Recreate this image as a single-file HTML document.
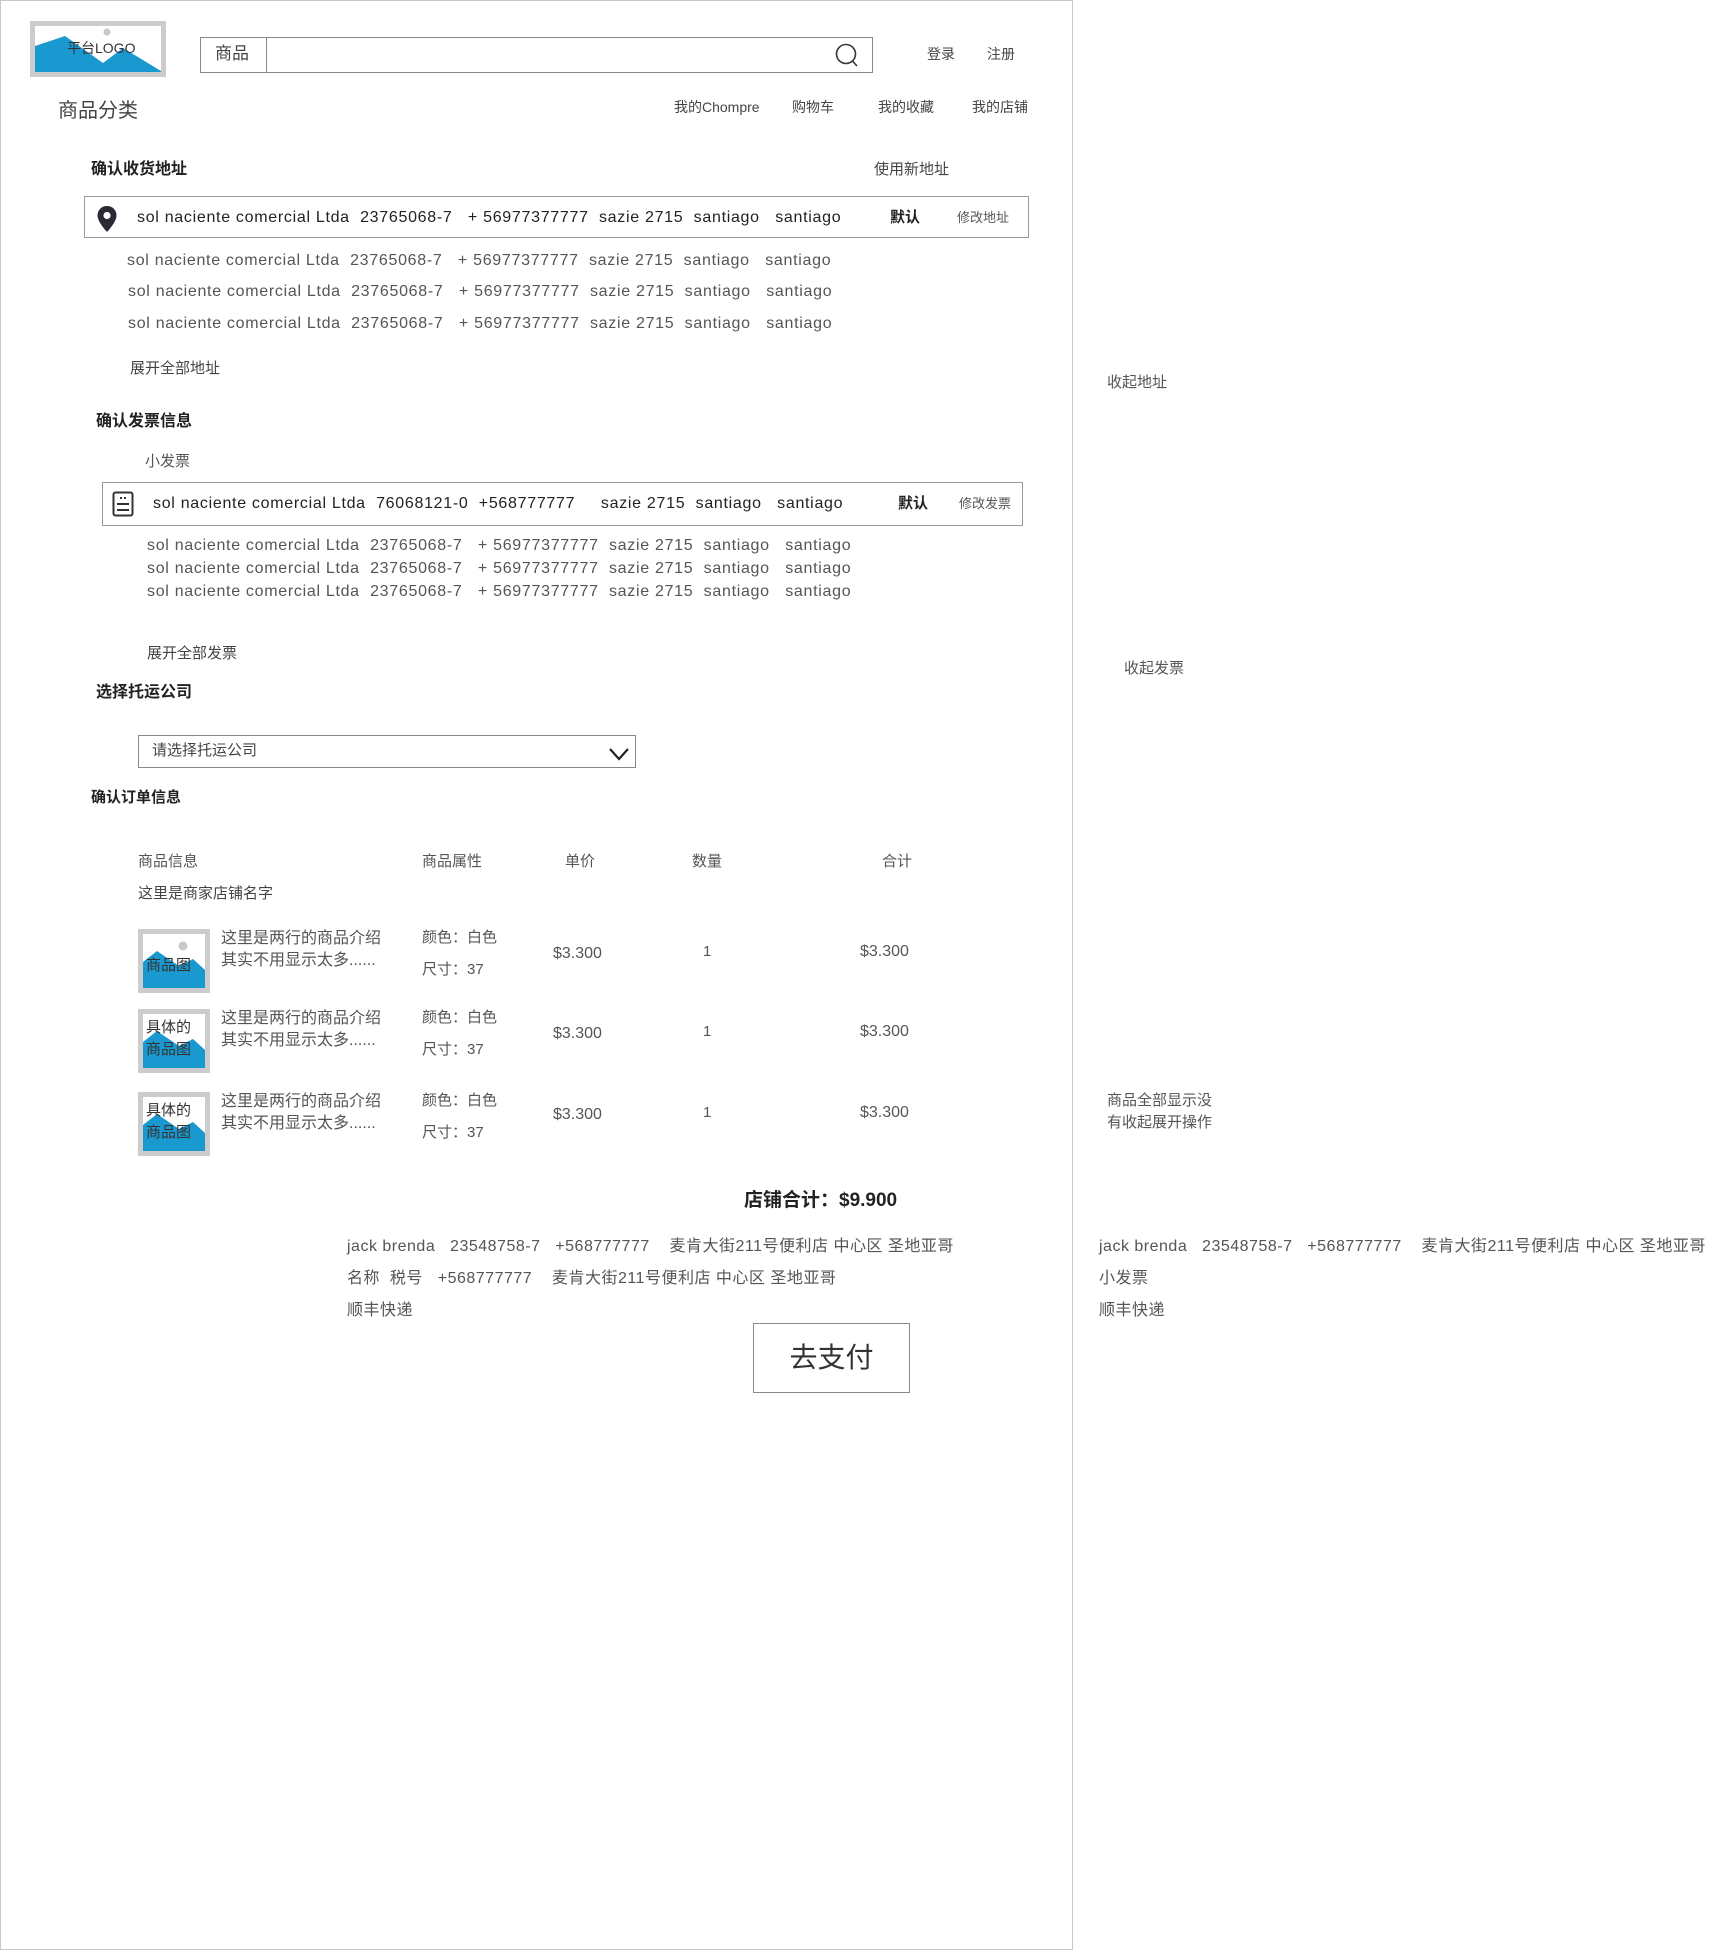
<!DOCTYPE html>
<html><head><meta charset="utf-8"><style>
*{margin:0;padding:0;box-sizing:border-box}
body{width:1719px;height:1954px;background:#fff;position:relative;overflow:hidden;font-family:"Liberation Sans","Noto Sans CJK SC",sans-serif;color:#333}
#w{position:absolute;left:0;top:1px;width:1719px;height:1950px}
.t{position:absolute;white-space:pre;line-height:20px;font-size:15px;color:#444}
.s{font-size:14px}
.b{font-weight:bold;color:#222;font-size:16px}
.g{color:#555}
.a{font-size:16px;letter-spacing:0.7px}
.j{font-size:16px;letter-spacing:0.5px}
.box{position:absolute;border:1.5px solid #888;background:#fff}
.img{position:absolute;width:72px;height:64px;background:#ccc;padding:5px}
.img .in{position:relative;width:100%;height:100%;background:#fff;overflow:hidden}
</style></head><body>
<div style="position:absolute;left:0;top:0;width:1073px;height:1950px;border:1.5px solid #c8c8c8"></div>
<div id="w">
<div style="position:absolute;left:30px;top:20px;width:136px;height:56px;background:#ccc;padding:5px">
<div style="position:relative;width:100%;height:100%;background:#fff;overflow:hidden">
<svg width="126" height="46" viewBox="0 0 126 46" style="position:absolute;left:0;top:0"><circle cx="72" cy="6" r="3.5" fill="#c8c8c8"/><polygon points="0,20 30,10 68,37 88,22 126,45 126,46 0,46" fill="#1a98d0"/></svg>
<div class="t" style="left:32px;top:12px;font-size:14px;color:#333">平台LOGO</div></div></div>

<div class="box" style="left:200px;top:36px;width:673px;height:36px;border-color:#888;border-width:1px"></div>
<div style="position:absolute;left:266px;top:36px;width:1px;height:36px;background:#888"></div>
<div class="t" style="left:215px;top:43px;font-size:17px">商品</div>
<svg style="position:absolute;left:834px;top:40px" width="26" height="28" viewBox="0 0 26 28"><circle cx="12" cy="13" r="9.5" fill="none" stroke="#333" stroke-width="1.6"/><line x1="18.5" y1="20" x2="23" y2="25" stroke="#333" stroke-width="1.6"/></svg>
<div class="t s" style="left:927px;top:43px">登录</div>
<div class="t s" style="left:987px;top:43px">注册</div>

<div class="t" style="left:58px;top:98px;font-size:20px;line-height:24px">商品分类</div>
<div class="t s" style="left:674px;top:96px">我的Chompre</div>
<div class="t s" style="left:792px;top:96px">购物车</div>
<div class="t s" style="left:878px;top:96px">我的收藏</div>
<div class="t s" style="left:972px;top:96px">我的店铺</div>

<div class="t b" style="left:91px;top:159px">确认收货地址</div>
<div class="t" style="left:874px;top:159px">使用新地址</div>
<div class="box" style="left:84px;top:195px;width:945px;height:42px;border-color:#999"></div>
<svg style="position:absolute;left:96px;top:204px" width="22" height="28" viewBox="0 0 22 28"><path d="M11 1C5.5 1 1.5 5 1.5 10.5C1.5 17 11 27 11 27S20.5 17 20.5 10.5C20.5 5 16.5 1 11 1Z" fill="#2a2a35"/><circle cx="11" cy="10.5" r="3.6" fill="#fff"/></svg>
<div class="t a" style="left:137px;top:207px;color:#222">sol naciente comercial Ltda  23765068-7   + 56977377777  sazie 2715  santiago   santiago</div>
<div class="t b" style="left:890px;top:207px;font-size:15px">默认</div>
<div class="t s g" style="left:957px;top:207px;font-size:13px">修改地址</div>
<div class="t g a" style="left:127px;top:250px">sol naciente comercial Ltda  23765068-7   + 56977377777  sazie 2715  santiago   santiago</div>
<div class="t g a" style="left:128px;top:281px">sol naciente comercial Ltda  23765068-7   + 56977377777  sazie 2715  santiago   santiago</div>
<div class="t g a" style="left:128px;top:313px">sol naciente comercial Ltda  23765068-7   + 56977377777  sazie 2715  santiago   santiago</div>
<div class="t" style="left:130px;top:358px">展开全部地址</div>

<div class="t b" style="left:96px;top:411px">确认发票信息</div>
<div class="t g" style="left:145px;top:451px">小发票</div>
<div class="box" style="left:102px;top:481px;width:921px;height:44px;border-color:#999"></div>
<svg style="position:absolute;left:112px;top:490px" width="22" height="26" viewBox="0 0 22 26"><rect x="1.5" y="1.5" width="19" height="23" rx="2" fill="none" stroke="#333" stroke-width="2"/><line x1="9" y1="6" x2="9" y2="8" stroke="#333" stroke-width="2"/><line x1="13" y1="6" x2="13" y2="8" stroke="#333" stroke-width="2"/><line x1="5" y1="13" x2="17" y2="13" stroke="#333" stroke-width="2"/><line x1="5" y1="19" x2="17" y2="19" stroke="#333" stroke-width="2"/></svg>
<div class="t a" style="left:153px;top:493px;color:#222">sol naciente comercial Ltda  76068121-0  +568777777     sazie 2715  santiago   santiago</div>
<div class="t b" style="left:898px;top:493px;font-size:15px">默认</div>
<div class="t s g" style="left:959px;top:493px;font-size:13px">修改发票</div>
<div class="t g a" style="left:147px;top:535px">sol naciente comercial Ltda  23765068-7   + 56977377777  sazie 2715  santiago   santiago</div>
<div class="t g a" style="left:147px;top:558px">sol naciente comercial Ltda  23765068-7   + 56977377777  sazie 2715  santiago   santiago</div>
<div class="t g a" style="left:147px;top:581px">sol naciente comercial Ltda  23765068-7   + 56977377777  sazie 2715  santiago   santiago</div>
<div class="t" style="left:147px;top:643px">展开全部发票</div>

<div class="t b" style="left:96px;top:682px">选择托运公司</div>
<div class="box" style="left:138px;top:734px;width:498px;height:33px;border-color:#888"></div>
<div class="t" style="left:152px;top:740px">请选择托运公司</div>
<svg style="position:absolute;left:608px;top:745px" width="22" height="16" viewBox="0 0 22 16"><polyline points="2,3 11,13 20,3" fill="none" stroke="#222" stroke-width="2.2"/></svg>

<div class="t b" style="left:91px;top:787px;font-size:15px">确认订单信息</div>
<div class="t g" style="left:138px;top:851px">商品信息</div>
<div class="t g" style="left:422px;top:851px">商品属性</div>
<div class="t g" style="left:565px;top:851px">单价</div>
<div class="t g" style="left:692px;top:851px">数量</div>
<div class="t g" style="left:882px;top:851px">合计</div>
<div class="t" style="left:138px;top:883px">这里是商家店铺名字</div>

<div class="img" style="left:138px;top:928px"><div class="in"><svg width="62" height="54" viewBox="0 0 62 54" style="position:absolute;left:0;top:0"><circle cx="40" cy="12" r="4.5" fill="#c8c8c8"/><polygon points="0,28 14,17 36,32 50,25 62,36 62,54 0,54" fill="#1a98d0"/></svg><div class="t" style="left:3px;top:22px;font-size:15px;color:#333">商品图</div></div></div>
<div class="img" style="left:138px;top:1008px"><div class="in"><svg width="62" height="54" viewBox="0 0 62 54" style="position:absolute;left:0;top:0"><polygon points="0,28 14,17 36,32 50,25 62,36 62,54 0,54" fill="#1a98d0"/></svg><div class="t" style="left:3px;top:4px;font-size:15px;color:#333">具体的</div><div class="t" style="left:3px;top:26px;font-size:15px;color:#333">商品图</div></div></div>
<div class="img" style="left:138px;top:1091px"><div class="in"><svg width="62" height="54" viewBox="0 0 62 54" style="position:absolute;left:0;top:0"><polygon points="0,28 14,17 36,32 50,25 62,36 62,54 0,54" fill="#1a98d0"/></svg><div class="t" style="left:3px;top:4px;font-size:15px;color:#333">具体的</div><div class="t" style="left:3px;top:26px;font-size:15px;color:#333">商品图</div></div></div>

<div class="t g" style="left:221px;top:928px;font-size:16px">这里是两行的商品介绍</div>
<div class="t g" style="left:221px;top:950px;font-size:16px">其实不用显示太多......</div>
<div class="t g" style="left:422px;top:927px">颜色：白色</div>
<div class="t g" style="left:422px;top:959px">尺寸：37</div>
<div class="t g" style="left:553px;top:943px;font-size:16px">$3.300</div>
<div class="t g" style="left:703px;top:941px">1</div>
<div class="t g" style="left:860px;top:941px;font-size:16px">$3.300</div>

<div class="t g" style="left:221px;top:1008px;font-size:16px">这里是两行的商品介绍</div>
<div class="t g" style="left:221px;top:1030px;font-size:16px">其实不用显示太多......</div>
<div class="t g" style="left:422px;top:1007px">颜色：白色</div>
<div class="t g" style="left:422px;top:1039px">尺寸：37</div>
<div class="t g" style="left:553px;top:1023px;font-size:16px">$3.300</div>
<div class="t g" style="left:703px;top:1021px">1</div>
<div class="t g" style="left:860px;top:1021px;font-size:16px">$3.300</div>

<div class="t g" style="left:221px;top:1091px;font-size:16px">这里是两行的商品介绍</div>
<div class="t g" style="left:221px;top:1113px;font-size:16px">其实不用显示太多......</div>
<div class="t g" style="left:422px;top:1090px">颜色：白色</div>
<div class="t g" style="left:422px;top:1122px">尺寸：37</div>
<div class="t g" style="left:553px;top:1104px;font-size:16px">$3.300</div>
<div class="t g" style="left:703px;top:1102px">1</div>
<div class="t g" style="left:860px;top:1102px;font-size:16px">$3.300</div>

<div class="t b" style="left:744px;top:1188px;font-size:19px;line-height:24px">店铺合计：$9.900</div>

<div class="t g j" style="left:347px;top:1236px">jack brenda   23548758-7   +568777777    麦肯大街211号便利店 中心区 圣地亚哥</div>
<div class="t g j" style="left:347px;top:1268px">名称  税号   +568777777    麦肯大街211号便利店 中心区 圣地亚哥</div>
<div class="t g j" style="left:347px;top:1300px">顺丰快递</div>
<div class="box" style="left:753px;top:1322px;width:157px;height:70px;border-color:#888"></div>
<div class="t" style="left:753px;top:1340px;width:157px;text-align:center;font-size:28px;line-height:34px;color:#333">去支付</div>

<div class="t g" style="left:1107px;top:372px;font-size:15px">收起地址</div>
<div class="t g" style="left:1124px;top:658px;font-size:15px">收起发票</div>
<div class="t g" style="left:1107px;top:1090px;font-size:15px">商品全部显示没</div>
<div class="t g" style="left:1107px;top:1112px;font-size:15px">有收起展开操作</div>
<div class="t g j" style="left:1099px;top:1236px">jack brenda   23548758-7   +568777777    麦肯大街211号便利店 中心区 圣地亚哥</div>
<div class="t g j" style="left:1099px;top:1268px">小发票</div>
<div class="t g j" style="left:1099px;top:1300px">顺丰快递</div>
</div>
</body></html>
